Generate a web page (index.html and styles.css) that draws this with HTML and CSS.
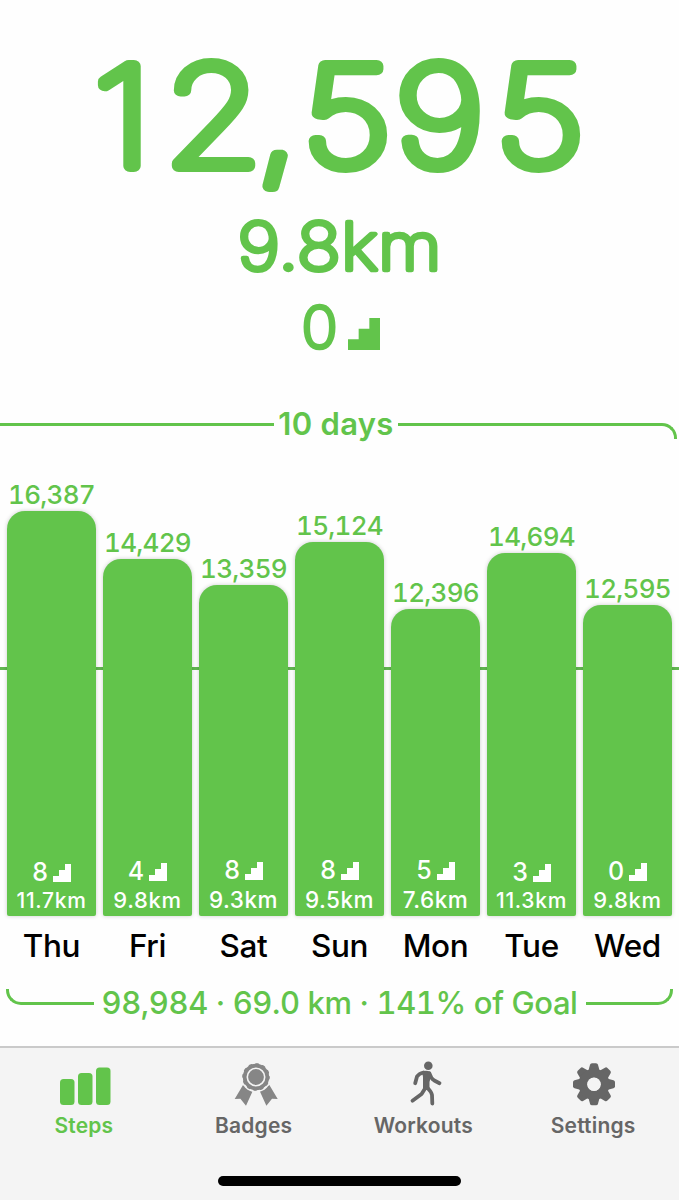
FILE: index.html
```html
<!DOCTYPE html>
<html lang="en">
<head>
    <meta charset="UTF-8">
    <meta name="viewport" content="width=device-width, initial-scale=1.0">
    <title>Steps</title>
    <link rel="stylesheet" href="styles.css">
</head>
<body>

<svg class="defs" width="0" height="0">
    <symbol id="stairs" viewBox="0 0 18 18">
        <path d="M0 12h6V6h6V0h6v18H0z"/>
    </symbol>
</svg>

<header class="today">
    <svg class="today-steps" viewBox="0 0 679 212">
        <text transform="scale(1.15 1)" y="166.5" x="81.4 142.6 222.8 262.8 343.3 430.6">12,595</text>
    </svg>
    <svg class="today-distance" viewBox="0 0 679 80">
        <text y="58" x="339.5" text-anchor="middle" textLength="204" lengthAdjust="spacingAndGlyphs">9.8km</text>
    </svg>
    <div class="today-floors">
        <svg class="today-count" viewBox="0 0 40 60"><text x="19.5" y="48" text-anchor="middle">0</text></svg>
        <svg class="stairs"><use href="#stairs"/></svg>
    </div>
</header>

<div class="streak">
    <div class="line streak-left"></div>
    <span>10 days</span>
    <div class="line streak-right"></div>
</div>

<div class="chart">
    <div class="goal"></div>
    <div class="column">
        <span class="steps">16,387</span>
        <div class="bar small" style="height: 405px">
            <div class="floors">8<svg class="stairs"><use href="#stairs"/></svg></div>
            <div class="km">11.7km</div>
        </div>
    </div>
    <div class="column">
        <span class="steps">14,429</span>
        <div class="bar" style="height: 357px">
            <div class="floors">4<svg class="stairs"><use href="#stairs"/></svg></div>
            <div class="km">9.8km</div>
        </div>
    </div>
    <div class="column">
        <span class="steps">13,359</span>
        <div class="bar large" style="height: 331px">
            <div class="floors">8<svg class="stairs"><use href="#stairs"/></svg></div>
            <div class="km">9.3km</div>
        </div>
    </div>
    <div class="column">
        <span class="steps">15,124</span>
        <div class="bar large" style="height: 374px">
            <div class="floors">8<svg class="stairs"><use href="#stairs"/></svg></div>
            <div class="km">9.5km</div>
        </div>
    </div>
    <div class="column">
        <span class="steps">12,396</span>
        <div class="bar large" style="height: 307px">
            <div class="floors">5<svg class="stairs"><use href="#stairs"/></svg></div>
            <div class="km">7.6km</div>
        </div>
    </div>
    <div class="column">
        <span class="steps">14,694</span>
        <div class="bar small" style="height: 363px">
            <div class="floors">3<svg class="stairs"><use href="#stairs"/></svg></div>
            <div class="km">11.3km</div>
        </div>
    </div>
    <div class="column">
        <span class="steps">12,595</span>
        <div class="bar" style="height: 311px">
            <div class="floors">0<svg class="stairs"><use href="#stairs"/></svg></div>
            <div class="km">9.8km</div>
        </div>
    </div>
</div>

<div class="days">
    <span>Thu</span>
    <span>Fri</span>
    <span>Sat</span>
    <span>Sun</span>
    <span>Mon</span>
    <span>Tue</span>
    <span>Wed</span>
</div>

<div class="total">
    <div class="line total-left"></div>
    <span>98,984 · 69.0 km · 141% of Goal</span>
    <div class="line total-right"></div>
</div>

<nav class="tabs">
    <a class="tab active">
        <svg viewBox="0 0 52 46">
            <rect x="1" y="15" width="14.5" height="26" rx="3.5"/>
            <rect x="19" y="9" width="14.5" height="32" rx="3.5"/>
            <rect x="37" y="3.5" width="14.5" height="37.5" rx="3.5"/>
        </svg>
        <span>Steps</span>
    </a>
    <a class="tab">
        <svg class="badge" viewBox="0 0 52 46">
            <path d="M14 21 5.700 35 11.400 34.800 17 41.700 23.700 27zM40.400 21 48.700 35 43 34.800 37.400 41.700 30.700 27z"/>
            <circle cx="27" cy="13" r="15.200" class="edge"/>
            <circle cx="27" cy="13" r="13.200"/>
            <circle cx="27" cy="13" r="12.300" class="scallop"/>
            <circle cx="27" cy="13" r="8.700" class="ring"/>
        </svg>
        <span>Badges</span>
    </a>
    <a class="tab">
        <svg viewBox="0 0 52 46">
            <circle cx="30.300" cy="1.700" r="4.300"/>
            <path d="M24 7.500Q28 5.800 32 7.500L33 12 31.500 18V25H25V13z"/>
            <path class="limb" d="M25.500 8.500Q21 9.500 19 12.500L17.200 19.200M31.500 9.500Q33 14.500 36.300 16.500L41.500 19.200M27.200 24.300 23.600 30 14.500 36.700M29.600 24Q33.500 28 34 31L34.300 39.500"/>
        </svg>
        <span>Workouts</span>
    </a>
    <a class="tab">
        <svg viewBox="0 0 52 46">
            <g transform="translate(26 20.300)">
                <path id="tooth" d="M-6-12-4-19.500Q-3.600-21-2-21H2Q3.600-21 4-19.500L6-12z"/>
                <use href="#tooth" transform="rotate(45)"/>
                <use href="#tooth" transform="rotate(90)"/>
                <use href="#tooth" transform="rotate(135)"/>
                <use href="#tooth" transform="rotate(180)"/>
                <use href="#tooth" transform="rotate(225)"/>
                <use href="#tooth" transform="rotate(270)"/>
                <use href="#tooth" transform="rotate(315)"/>
                <circle class="gear" r="11"/>
                <circle class="hole" r="6.800"/>
            </g>
        </svg>
        <span>Settings</span>
    </a>
    <div class="home"></div>
</nav>

</body>
</html>
```
FILE: styles.css
```css
* {
    box-sizing: border-box;
}
body {
    margin: 0;
    height: 1200px;
    display: flex;
    flex-direction: column;
    background: #fefefe;
    color: #62c44b;
    font-family: Inter, "Liberation Sans", sans-serif;
    overflow: hidden;
}
svg {
    display: block;
    fill: currentColor;
    overflow: visible;
}
.defs {
    position: absolute;
}

/* today */
.today {
    height: 404px;
}
.today text {
    stroke: currentColor;
    stroke-linejoin: round;
    stroke-linecap: round;
}
.today-steps {
    width: 679px;
    height: 212px;
    font-size: 138px;
    font-weight: 100;
    stroke-width: 12px;
}
.today-distance {
    width: 679px;
    height: 80px;
    font-size: 66px;
    font-weight: 200;
    stroke-width: 4.5px;
}
.today-floors {
    display: flex;
    justify-content: center;
    align-items: flex-start;
    gap: 8px;
}
.today-count {
    width: 40px;
    height: 60px;
    margin-top: 9px;
    font-size: 60px;
    font-weight: 300;
    stroke-width: 2.5px;
}
.today-floors .stairs {
    width: 32px;
    height: 32px;
    margin-top: 26px;
}

/* streak line */
.streak {
    height: 40px;
    display: flex;
    font-size: 31px;
    font-weight: 600;
    line-height: 40px;
}
.streak span,
.total span {
    flex: none;
    text-align: center;
    white-space: nowrap;
}
.streak span {
    width: 124px;
    letter-spacing: 0.3px;
}
.line {
    border: 0 solid #62c44b;
}
.streak-left {
    width: 274px;
    height: 16px;
    margin-top: 19px;
    border-top-width: 3px;
}
.streak-right {
    width: 279px;
    height: 16px;
    margin-top: 19px;
    border-top-width: 3px;
    border-right-width: 3px;
    border-top-right-radius: 15px;
}

/* bars */
.chart {
    position: relative;
    height: 472px;
    padding: 0 7px;
    display: grid;
    grid-template-columns: repeat(7, 89px);
    gap: 7px;
}
.goal {
    position: absolute;
    left: 0;
    right: 0;
    top: 223px;
    height: 3px;
    background: #62b651;
}
.column {
    position: relative;
    display: flex;
    flex-direction: column;
    justify-content: flex-end;
    align-items: center;
}
.steps {
    font-size: 26px;
    font-weight: 500;
    font-variant-numeric: tabular-nums;
    line-height: 32px;
    letter-spacing: -0.7px;
}
.bar {
    width: 89px;
    padding-bottom: 1px;
    display: flex;
    flex-direction: column;
    justify-content: flex-end;
    align-items: center;
    border-radius: 18px 18px 2px 2px;
    background: #62c44b;
    box-shadow: 0 0 4px rgba(0, 0, 0, 0.2);
    color: #fff;
    font-weight: 500;
}
.floors {
    display: flex;
    align-items: center;
    gap: 5px;
    font-size: 25px;
    line-height: 28px;
}
.floors .stairs {
    width: 18px;
    height: 18px;
    margin-top: 2px;
}
.km {
    font-size: 22px;
    line-height: 30px;
    letter-spacing: 0.7px;
}
.small .km {
    font-size: 21px;
    line-height: 29px;
}
.large .km {
    font-size: 22.5px;
    line-height: 31px;
    letter-spacing: 0.5px;
}

.days {
    height: 60px;
    padding: 0 7px;
    display: grid;
    grid-template-columns: repeat(7, 89px);
    gap: 7px;
    color: #000;
    font-size: 31.5px;
    font-weight: 450;
    line-height: 60px;
    letter-spacing: -0.4px;
    text-align: center;
}

/* week total */
.total {
    height: 70px;
    padding-left: 6px;
    display: flex;
    font-size: 31px;
    font-weight: 450;
    font-variant-numeric: tabular-nums;
    line-height: 54px;
    letter-spacing: -0.4px;
}
.total span {
    width: 492px;
}
.total-left,
.total-right {
    width: 87.5px;
    height: 16px;
    margin-top: 13px;
    border-bottom-width: 3px;
}
.total-left {
    border-left-width: 3px;
    border-bottom-left-radius: 15px;
}
.total-right {
    border-right-width: 3px;
    border-bottom-right-radius: 15px;
}

/* tab bar */
.tabs {
    position: relative;
    height: 154px;
    display: grid;
    grid-template-columns: repeat(4, 1fr);
    align-items: start;
    border-top: 2px solid #cacaca;
    background: #f4f4f4;
}
.tab {
    padding-top: 16px;
    display: flex;
    flex-direction: column;
    align-items: center;
    color: #666;
    font-size: 21px;
    font-weight: 560;
    line-height: 32px;
    letter-spacing: 0.2px;
}
.tab span {
    margin-right: 2px;
}
.tab svg {
    width: 52px;
    height: 46px;
}
.tab.active {
    color: #62c44b;
}
.badge {
    color: #868686;
}
.edge {
    fill: #f4f4f4;
}
.scallop {
    fill: none;
    stroke: #868686;
    stroke-width: 3;
    stroke-linecap: round;
    stroke-dasharray: 1.5 4.94;
}
.ring {
    fill: none;
    stroke: #f4f4f4;
    stroke-width: 1.6;
}
.limb {
    fill: none;
    stroke: currentColor;
    stroke-width: 3.8;
    stroke-linecap: round;
    stroke-linejoin: round;
}
.gear {
    fill: none;
    stroke: currentColor;
    stroke-width: 9;
}
.hole {
    fill: #f4f4f4;
}
.home {
    position: absolute;
    left: 218px;
    top: 128px;
    width: 243px;
    height: 10px;
    border-radius: 5px;
    background: #000;
}
```
